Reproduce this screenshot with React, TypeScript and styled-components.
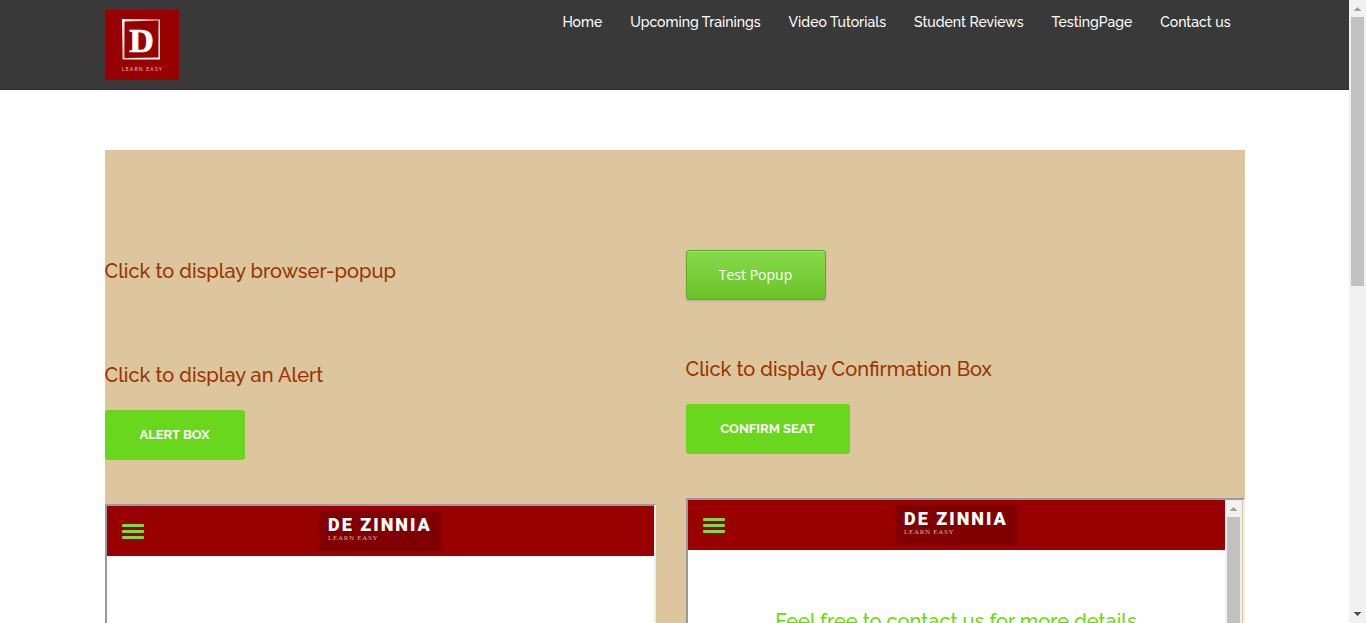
import React from "react";
import styled, { createGlobalStyle } from "styled-components";

const sans = `Raleway, Lato, "Open Sans", sans-serif`;

const GlobalStyle = createGlobalStyle`
  *, *::before, *::after { box-sizing: border-box; }
  body { margin: 0; background: #fff; font-family: ${sans}; }
  h2, p, ul { margin: 0; padding: 0; }
`;

const Viewport = styled.div`
  display: flex;
  height: 100vh;
  overflow: hidden;
`;

const Page = styled.div`
  flex: 1;
  min-width: 0;
  overflow: hidden;
`;

const Container = styled.div`
  width: 100%;
  max-width: 1140px;
  margin: 0 auto;
`;

const Header = styled.header`
  background: #393939;
  border-bottom: 1px solid #362f32;
`;

const HeaderRow = styled(Container)`
  display: flex;
  justify-content: space-between;
  align-items: flex-start;
  padding: 10px 14px 9px 0;
`;

const LogoLink = styled.a`
  display: block;
  line-height: 0;
`;

const NavList = styled.ul`
  display: flex;
  gap: 28px;
  list-style: none;
`;

const NavLink = styled.a`
  display: block;
  color: #fff;
  font-size: 14px;
  font-weight: 500;
  line-height: 24px;
  text-decoration: none;
  white-space: nowrap;
`;

const Main = styled.main`
  padding-top: 60px;
`;

const Panel = styled(Container)`
  display: grid;
  grid-template-columns: 551fr 559fr;
  gap: 30px;
  padding-top: 100px;
  background: #ddc69d;
`;

const Column = styled.section`
  min-width: 0;
`;

const Block = styled.div<{ $top?: number; $gap: number }>`
  padding-top: ${(p) => p.$top ?? 0}px;
  margin-bottom: ${(p) => p.$gap}px;
`;

const Heading = styled.h2`
  color: #993300;
  font-size: 20px;
  font-weight: 500;
  line-height: 30px;
`;

const Button = styled.button`
  display: block;
  height: 50px;
  padding: 0;
  border: 0;
  border-radius: 3px;
  color: #fff;
  cursor: pointer;
`;

const ActionButton = styled(Button)<{ $width: number }>`
  width: ${(p) => p.$width}px;
  margin-top: 20px;
  background: #69d81d;
  font: 700 13px/20px ${sans};
  text-transform: uppercase;
`;

const PopupButton = styled(Button)`
  width: 140px;
  border: 1px solid #5cb027;
  background: linear-gradient(#87da4b, #6ac228);
  box-shadow: inset 0 1px 0 #9be26a, 0 1px 2px rgba(0, 0, 0, 0.15);
  font: 400 14px/20px "Open Sans", sans-serif;
`;

const Frame = styled.div`
  display: flex;
  height: 400px;
  border: 2px solid;
  border-color: #9a9a9a #eeeeee #eeeeee #9a9a9a;
`;

const FrameBody = styled.div`
  flex: 1;
  min-width: 0;
  background: #fff;
`;

const FrameBar = styled.div`
  display: grid;
  grid-template-columns: 1fr auto 1fr;
  align-items: center;
  height: 50px;
  padding: 0 15px;
  background: #990000;
`;

const MenuButton = styled.button`
  justify-self: start;
  padding: 0;
  border: 0;
  background: none;
  line-height: 0;
  cursor: pointer;
`;

const FrameText = styled.p`
  padding-top: 56px;
  color: #66dd00;
  font-size: 20px;
  font-weight: 500;
  line-height: 30px;
  text-align: center;
`;

const Scrollbar = styled.div<{ $inset?: boolean }>`
  display: flex;
  flex-direction: column;
  align-items: center;
  flex: none;
  width: 17px;
  margin-right: ${(p) => (p.$inset ? 1 : 0)}px;
  background: #f1f1f1;
`;

const ScrollArrow = styled.svg`
  flex: none;
  display: block;
  width: 17px;
  height: 17px;
`;

const ScrollTrack = styled.div`
  flex: 1;
  width: 13px;
`;

const ScrollThumb = styled.div<{ $size: string }>`
  height: ${(p) => p.$size};
  background: #c1c1c1;
`;

function ScrollBar({ size, inset }: { size: string; inset?: boolean }) {
  return (
    <Scrollbar $inset={inset} aria-hidden="true">
      <ScrollArrow viewBox="0 0 17 17" shapeRendering="crispEdges">
        <path d="M8 7h1v1h1v1h1v1h1v1H5v-1h1V9h1V8h1z" fill="#a3a3a3" />
      </ScrollArrow>
      <ScrollTrack>
        <ScrollThumb $size={size} />
      </ScrollTrack>
      <ScrollArrow viewBox="0 0 17 17" shapeRendering="crispEdges">
        <path d="M5 6h7v1h-1v1h-1v1H9v1H8V9H7V8H6V7H5z" fill="#505050" />
      </ScrollArrow>
    </Scrollbar>
  );
}

function SiteLogo() {
  return (
    <svg width="74" height="70" viewBox="0 0 74 70" role="img" aria-label="D Learn Easy">
      <defs>
        <linearGradient id="silver" x1="0" y1="0" x2="1" y2="1">
          <stop offset="0" stopColor="#fff" />
          <stop offset="0.45" stopColor="#dcc4c4" />
          <stop offset="0.7" stopColor="#fff" />
          <stop offset="1" stopColor="#fff" />
        </linearGradient>
      </defs>
      <rect width="74" height="70" fill="#990000" />
      <path
        d="M17 9L55 9.500V49.500H17.500zM19.500 11.500V48L53.500 47.500V10.500z"
        fill="url(#silver)"
        fillRule="evenodd"
      />
      <text
        x="36.500"
        y="42"
        textAnchor="middle"
        fontFamily="'Liberation Serif', serif"
        fontWeight="700"
        fontSize="34"
        fill="#fff"
        stroke="#fff"
        strokeWidth="0.700"
      >
        D
      </text>
      <text x="17" y="61" fontFamily="Lato, sans-serif" fontSize="5" letterSpacing="1.200" fill="#e6c4c4">
        LEARN EASY
      </text>
    </svg>
  );
}

function BrandLogo() {
  return (
    <svg width="122" height="40" viewBox="0 0 122 40" role="img" aria-label="De Zinnia Learn Easy">
      <rect width="122" height="40" fill="#800000" />
      <text x="9" y="20" fontFamily="Roboto, sans-serif" fontWeight="900" fontSize="18" letterSpacing="2" fill="#fff">
        DE ZINNIA
      </text>
      <text x="9" y="29" fontFamily="'Liberation Serif', serif" fontSize="7" letterSpacing="0.700" fill="#d9b0b0">
        LEARN EASY
      </text>
    </svg>
  );
}

function FrameHeader() {
  return (
    <FrameBar>
      <MenuButton type="button" aria-label="Menu">
        <svg width="22" height="15" viewBox="0 0 22 15" fill="#82d93f">
          <rect width="22" height="3" rx="1" />
          <rect y="6" width="22" height="3" rx="1" />
          <rect y="12" width="22" height="3" rx="1" />
        </svg>
      </MenuButton>
      <BrandLogo />
    </FrameBar>
  );
}

const links = ["Home", "Upcoming Trainings", "Video Tutorials", "Student Reviews", "TestingPage", "Contact us"];

export default function App() {
  return (
    <Viewport>
      <GlobalStyle />
      <Page>
        <Header>
          <HeaderRow>
            <LogoLink href="#">
              <SiteLogo />
            </LogoLink>
            <nav>
              <NavList>
                {links.map((label) => (
                  <li key={label}>
                    <NavLink href="#">{label}</NavLink>
                  </li>
                ))}
              </NavList>
            </nav>
          </HeaderRow>
        </Header>
        <Main>
          <Panel>
            <Column>
              <Block $top={6} $gap={74}>
                <Heading>Click to display browser-popup</Heading>
              </Block>
              <Block $gap={44}>
                <Heading>Click to display an Alert</Heading>
                <ActionButton type="button" $width={140}>Alert Box</ActionButton>
              </Block>
              <Frame>
                <FrameBody>
                  <FrameHeader />
                </FrameBody>
              </Frame>
            </Column>
            <Column>
              <Block $gap={54}>
                <PopupButton type="button">Test Popup</PopupButton>
              </Block>
              <Block $gap={44}>
                <Heading>Click to display Confirmation Box</Heading>
                <ActionButton type="button" $width={164}>Confirm Seat</ActionButton>
              </Block>
              <Frame>
                <FrameBody>
                  <FrameHeader />
                  <FrameText>Feel free to contact us for more details</FrameText>
                </FrameBody>
                <ScrollBar size="70%" inset />
              </Frame>
            </Column>
          </Panel>
        </Main>
      </Page>
      <ScrollBar size="45.7%" />
    </Viewport>
  );
}
